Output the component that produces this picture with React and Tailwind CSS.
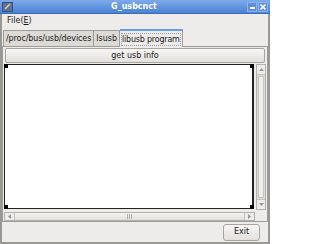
import React from 'react';

const font = { fontFamily: '"DejaVu Sans", "Liberation Sans", sans-serif' };

function Corner({ pos }) {
  return <div className={`absolute w-[4px] h-[4px] bg-black ${pos}`}></div>;
}

export default function App() {
  return (
    <div style={font} className="w-[270px] h-[244px] bg-[#edeceb] flex flex-col text-[8px] text-[#1a1a1a] overflow-hidden">
      {/* title bar */}
      <div className="h-[14px] bg-gradient-to-b from-[#7eaaea] to-[#4a82d4] flex items-center px-[2px] border-b border-[#3c6cb8]">
        <div className="w-[11px] h-[10px] bg-[#5a6fa8] border border-[#3d4e80] flex items-center justify-center">
          <svg width="7" height="7" viewBox="0 0 7 7"><path d="M1 6 L6 1" stroke="#f4d35e" strokeWidth="1.5" /></svg>
        </div>
        <div className="flex-1 text-center text-white font-bold text-[8px] leading-none pl-[8px]">G_usbcnct</div>
        <div className="flex gap-[1px]">
          <div className="w-[10px] h-[10px] border border-[#8fb4ea] bg-[#5d8fdc] flex items-end justify-center pb-[2px]">
            <div className="w-[5px] h-[2px] bg-white"></div>
          </div>
          <div className="w-[10px] h-[10px] border border-[#8fb4ea] bg-[#5d8fdc] flex items-center justify-center">
            <svg width="6" height="6" viewBox="0 0 6 6"><path d="M0.5 0.5 L5.5 5.5 M5.5 0.5 L0.5 5.5" stroke="white" strokeWidth="1.6" /></svg>
          </div>
        </div>
      </div>
      {/* window body */}
      <div className="flex-1 flex flex-col border-x-2 border-b-2 border-[#9a9893]">
        {/* menu bar */}
        <div className="h-[14px] flex items-center pl-[5px]">
          <span>File(<span className="underline">E</span>)</span>
        </div>
        {/* tabs */}
        <div className="flex items-end h-[18px] pl-[1px]">
          <div className="h-[16px] px-[2px] flex items-center bg-[#dcdad5] border border-b-0 border-[#9d9c98] tracking-[-0.1px]">/proc/bus/usb/devices</div>
          <div className="h-[16px] px-[2px] flex items-center bg-[#dcdad5] border border-l-0 border-b-0 border-[#9d9c98]">lsusb</div>
          <div className="h-[18px] px-[1px] flex items-center bg-[#edeceb] border border-l-0 border-b-0 border-[#9d9c98] border-t-2 border-t-[#6a9ee4] relative top-[1px]">
            <span className="border border-dotted border-[#9a9a9a] leading-[11px] tracking-[-0.2px]">libusb program</span>
          </div>
        </div>
        {/* notebook panel */}
        <div className="h-[176px] border border-[#9d9c98] flex flex-col px-[1px] pt-[1px]">
          <div className="h-[17px] mx-[1px] border border-[#a8a6a1] rounded-[2px] bg-gradient-to-b from-[#f7f6f5] to-[#e3e1dd] flex items-center justify-center">get usb info</div>
          <div className="flex mt-[1px] gap-[2px]">
            <div className="w-[251px] h-[145px] bg-white border-y border-r-2 border-l border-[#222] relative">
              <Corner pos="top-[-1px] left-[-1px]" />
              <Corner pos="top-[-1px] right-[-2px]" />
              <Corner pos="bottom-[-1px] left-[-1px]" />
              <Corner pos="bottom-[-1px] right-[-2px]" />
            </div>
            <div className="w-[10px] h-[146px] border border-[#b3b1ac] bg-[#dcdad5] flex flex-col">
              <div className="h-[10px] bg-[#edeceb] border-b border-[#c6c4bf] flex items-center justify-center">
                <svg width="5" height="3" viewBox="0 0 5 3"><path d="M0 3 L2.5 0 L5 3Z" fill="#9a9893" /></svg>
              </div>
              <div className="flex-1 mx-[1px] my-[1px] bg-[#eeedea] border border-[#c6c4bf] rounded-[1px]"></div>
              <div className="h-[10px] bg-[#edeceb] border-t border-[#c6c4bf] flex items-center justify-center">
                <svg width="5" height="3" viewBox="0 0 5 3"><path d="M0 0 L2.5 3 L5 0Z" fill="#9a9893" /></svg>
              </div>
            </div>
          </div>
          <div className="w-[251px] h-[10px] mt-[2px] border border-[#b3b1ac] bg-[#dcdad5] flex">
            <div className="w-[10px] bg-[#edeceb] border-r border-[#c6c4bf] flex items-center justify-center">
              <svg width="3" height="5" viewBox="0 0 3 5"><path d="M3 0 L0 2.5 L3 5Z" fill="#9a9893" /></svg>
            </div>
            <div className="flex-1 bg-gradient-to-b from-[#f4f3f1] to-[#e2e0dc] flex items-center justify-center">
              <div className="flex gap-[1px]">
                <div className="w-[1px] h-[5px] bg-[#b0aea9]"></div>
                <div className="w-[1px] h-[5px] bg-[#b0aea9]"></div>
                <div className="w-[1px] h-[5px] bg-[#b0aea9]"></div>
              </div>
            </div>
            <div className="w-[10px] bg-[#edeceb] border-l border-[#c6c4bf] flex items-center justify-center">
              <svg width="3" height="5" viewBox="0 0 3 5"><path d="M0 0 L3 2.5 L0 5Z" fill="#9a9893" /></svg>
            </div>
          </div>
        </div>
        {/* bottom */}
        <div className="flex-1 flex justify-end items-center pr-[8px]">
          <div className="w-[37px] h-[17px] border border-[#a8a6a1] rounded-[3px] bg-gradient-to-b from-[#f7f6f5] to-[#e3e1dd] flex items-center justify-center">Exit</div>
        </div>
      </div>
    </div>
  );
}
